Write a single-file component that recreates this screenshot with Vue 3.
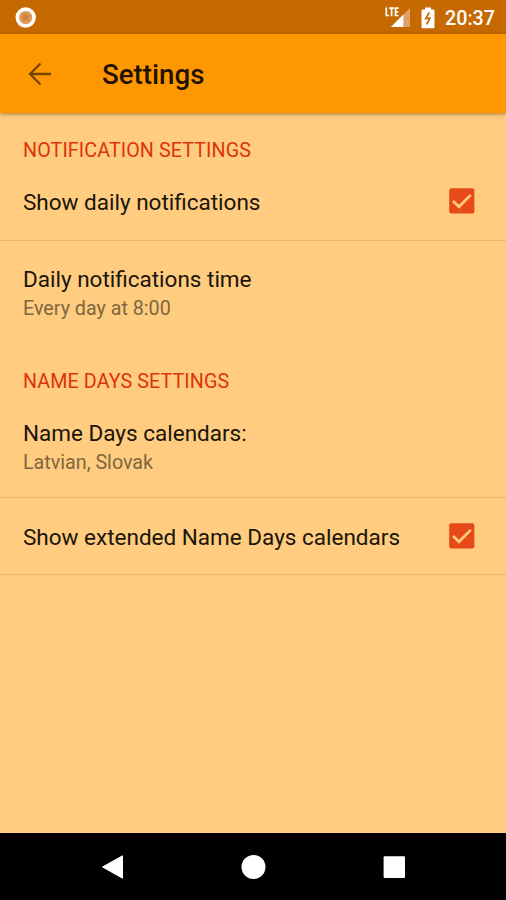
<script setup>
const sections = [
  {
    title: 'NOTIFICATION SETTINGS',
    items: [
      { title: 'Show daily notifications', checked: true, divider: true },
      { title: 'Daily notifications time', summary: 'Every day at 8:00' },
    ],
  },
  {
    title: 'NAME DAYS SETTINGS',
    items: [
      { title: 'Name Days calendars:', summary: 'Latvian, Slovak', divider: true },
      { title: 'Show extended Name Days calendars', checked: true, divider: true },
    ],
  },
]
</script>

<template>
  <div class="screen">
    <div class="status">
      <svg class="recording" viewBox="0 0 22 22">
        <circle cx="10.700" cy="10.500" r="8.400" fill="#dc9a58" stroke="#fff" stroke-width="3.600" />
        <circle cx="10.700" cy="10.500" r="3.200" fill="#d1813a" />
      </svg>
      <svg class="signal" viewBox="0 0 28 24">
        <path d="M25 3V22H6Z" fill="#dda068" />
        <path d="M18.400 9.600V22H6Z" fill="#fff" />
        <g fill="none" stroke="#fff" stroke-width="1.700">
          <path d="M1.300 2.500V10.500H4.200M4.200 3.200H9M6.600 3.200V11.200M13.600 3.200H10.500V10.500H13.600M10.500 6.900H13.200" />
        </g>
      </svg>
      <svg class="battery" viewBox="0 0 14 22">
        <path d="M4 0.500H10V2.500H12.500Q13.500 2.500 13.500 3.700V20Q13.500 21.200 12.300 21.200H1.700Q.5 21.200 .5 20V3.700Q.5 2.500 1.600 2.500H4Z" fill="#fff" />
        <path d="M8.300 5.500L4.700 11.500L8.900 11.200L5.700 17.300" fill="none" stroke="#c66900" stroke-width="1.700" />
      </svg>
      <span class="clock">20:37</span>
    </div>
    <header class="toolbar">
      <svg class="back" viewBox="0 0 24 24">
        <path d="M12.500 1.500L2 12L12.500 22.500M2 12H23" fill="none" stroke="#754607" stroke-width="2.300" />
      </svg>
      <h1>Settings</h1>
    </header>
    <main>
      <section v-for="section in sections" :key="section.title">
        <h2>{{ section.title }}</h2>
        <div
          v-for="item in section.items"
          :key="item.title"
          class="row"
          :class="{ tall: item.summary, divided: item.divider }"
        >
          <div class="labels">
            <div class="title">{{ item.title }}</div>
            <div v-if="item.summary" class="summary">{{ item.summary }}</div>
          </div>
          <svg v-if="item.checked" class="check" viewBox="0 0 26 26">
            <rect x=".2" y=".3" width="25.200" height="25.200" rx="2.200" fill="#e64a19" />
            <path d="M4 13L10 18.800L21.800 6.900" fill="none" stroke="#ffcc80" stroke-width="2.700" />
          </svg>
        </div>
      </section>
    </main>
    <nav>
      <svg viewBox="0 0 26 26"><path d="M2.500 13L22.500 1.800V24.200Z" fill="#fff" stroke="#fff" stroke-linejoin="round" /></svg>
      <svg viewBox="0 0 26 26"><circle cx="13.500" cy="13" r="12" fill="#fff" /></svg>
      <svg viewBox="0 0 26 26"><rect x="2.600" y="2.300" width="21.400" height="21.800" rx="1" fill="#fff" /></svg>
    </nav>
  </div>
</template>

<style>
body {
  margin: 0;
}
</style>

<style scoped>
.screen {
  display: flex;
  flex-direction: column;
  width: 506px;
  height: 900px;
  overflow: hidden;
  background: #ffcc80;
  font-family: Roboto, sans-serif;
}
.status {
  display: flex;
  align-items: center;
  flex: none;
  height: 34px;
  box-sizing: border-box;
  padding: 2px 11px 0 15px;
  background: #c66900;
}
.recording {
  width: 22px;
  height: 22px;
}
.signal {
  width: 28px;
  height: 24px;
  margin-left: auto;
  margin-bottom: 2px;
}
.battery {
  width: 14px;
  height: 22px;
  margin-left: 8px;
}
.clock {
  width: 50px;
  margin-top: 2px;
  margin-left: 10px;
  color: #fff;
  font-size: 19.700px;
  font-weight: 500;
  line-height: 30px;
  white-space: nowrap;
}
.toolbar {
  display: flex;
  align-items: center;
  flex: none;
  height: 79px;
  padding-left: 28px;
  background: #ff9800;
  box-shadow: 0 1px 4px rgba(80, 45, 0, 0.5);
}
.back {
  width: 24px;
  height: 24px;
}
h1 {
  margin: 2px 0 0 50px;
  color: #1f1300;
  font-size: 27.700px;
  font-weight: 500;
  line-height: 34px;
}
main {
  flex: 1;
  padding-top: 22px;
}
section + section {
  margin-top: 23px;
}
h2 {
  margin: 0;
  padding: 3px 23px 0;
  color: #dd3409;
  font-size: 19.700px;
  font-weight: 400;
  letter-spacing: 0.1px;
  line-height: 26px;
}
.row {
  display: flex;
  align-items: center;
  height: 76px;
  padding: 0 31px 0 23px;
}
.row.tall {
  height: 102px;
}
.row.divided {
  border-bottom: 1px solid #e6b873;
}
.tall + .row {
  height: 74px;
  padding-top: 2px;
}
.labels {
  flex: 1;
}
.tall .labels {
  padding-top: 3px;
}
.title {
  color: #1b150b;
  font-size: 22.500px;
  line-height: 30px;
}
.summary {
  margin-top: 1px;
  color: #806640;
  font-size: 19.700px;
  line-height: 28px;
}
.check {
  width: 26px;
  height: 26px;
  margin-bottom: 2px;
}
nav {
  display: flex;
  justify-content: center;
  align-items: center;
  gap: 114.500px;
  flex: none;
  height: 67px;
  background: #000;
}
nav svg {
  width: 26px;
  height: 26px;
}
</style>
